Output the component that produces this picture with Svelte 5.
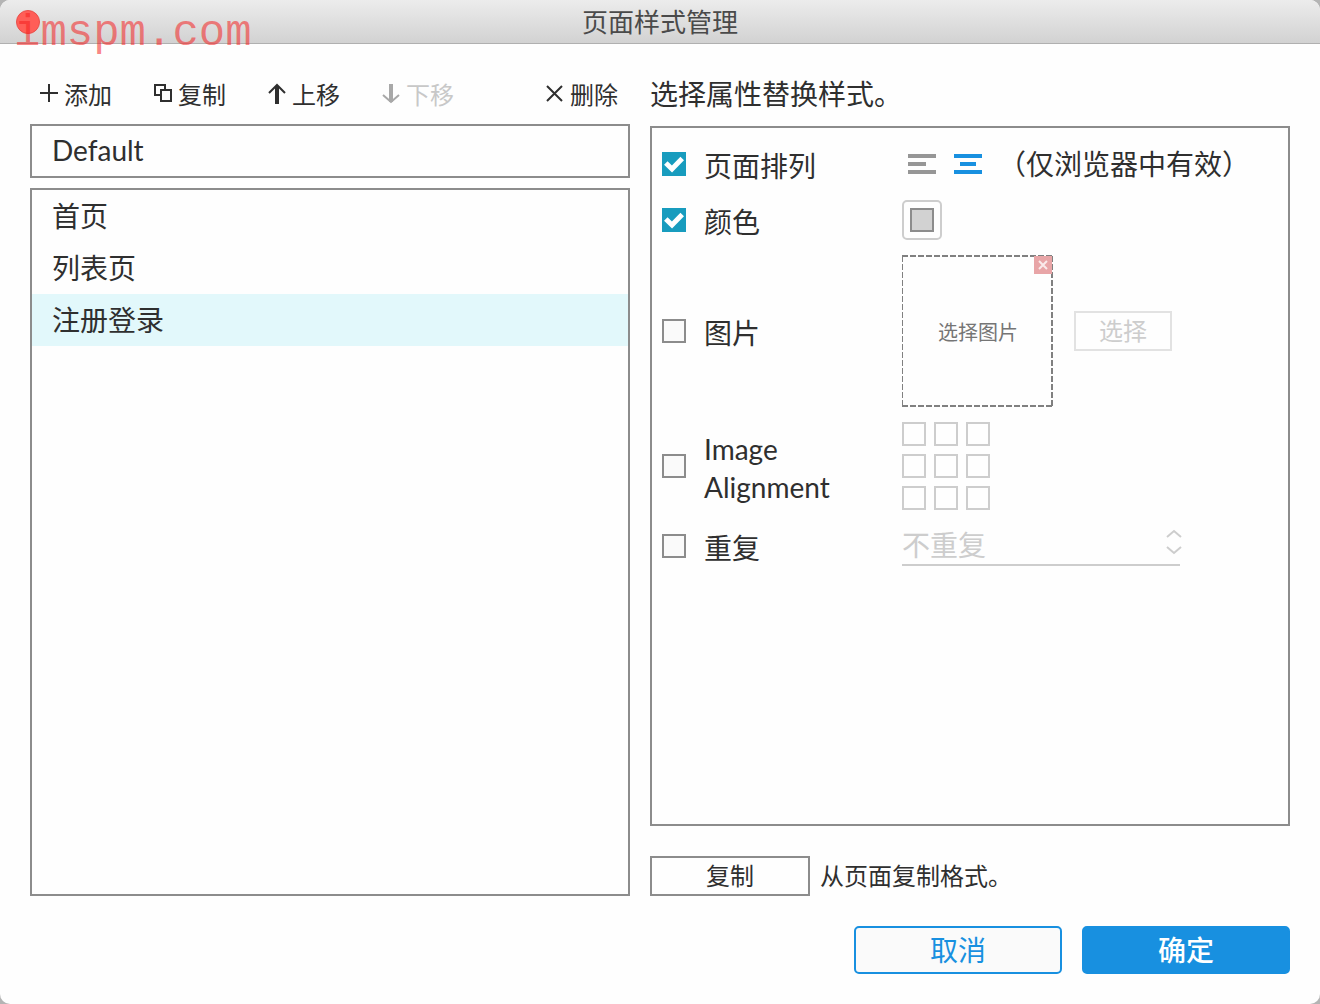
<script lang="ts">
	let selectedPage = $state('注册登录');
	let pageAlign = $state('center');
	let enabled = $state({
		align: true,
		color: true,
		image: false,
		imageAlign: false,
		repeat: false
	});

	const pages = ['首页', '列表页', '注册登录'];
	const anchors = ['左上', '上', '右上', '左', '中', '右', '左下', '下', '右下'];
</script>

{#snippet checkbox(id: keyof typeof enabled)}
	<span class="check">
		<input type="checkbox" {id} bind:checked={enabled[id]} />
		{#if enabled[id]}
			<svg viewBox="0 0 24 24" aria-hidden="true">
				<path d="M3.8 11l6.2 6L20.2 6.5" />
			</svg>
		{/if}
	</span>
{/snippet}

<div class="window">
	<header class="titlebar">
		<span class="close-dot"></span>
		<h1>页面样式管理</h1>
		<span class="site">imspm.com</span>
	</header>

	<main class="content">
		<section class="styles">
			<div class="toolbar">
				<button class="tool">
					<svg viewBox="0 1 18 24"><path d="M0 11h18M9 2v18" /></svg>
					添加
				</button>
				<button class="tool">
					<svg viewBox="0 1 18 24"><path d="M7 13H1V3h10v5M7 8h10v11H7z" /></svg>
					复制
				</button>
				<button class="tool">
					<svg viewBox="0 1 18 24">
						<path d="M1 11l8-8 8 8" />
						<path class="stem" d="M9 4v18" />
					</svg>
					上移
				</button>
				<button class="tool" disabled>
					<svg viewBox="0 1 18 24">
						<path d="M1 13l8 7 8-7" />
						<path class="stem" d="M9 2v18" />
					</svg>
					下移
				</button>
				<button class="tool remove">
					<svg viewBox="0 1 18 24"><path d="M1 4l15 15M16 4L1 19" /></svg>
					删除
				</button>
			</div>

			<button class="item default" onclick={() => (selectedPage = 'Default')}>Default</button>

			<ul class="list">
				{#each pages as page}
					<li>
						<button
							class="item"
							class:selected={page === selectedPage}
							onclick={() => (selectedPage = page)}
						>
							{page}
						</button>
					</li>
				{/each}
			</ul>
		</section>

		<section class="properties">
			<h2>选择属性替换样式。</h2>

			<div class="panel">
				<div class="row">
					{@render checkbox('align')}
					<label for="align">页面排列</label>
					<div class="control aligns">
						<button
							class="align"
							class:active={pageAlign === 'left'}
							aria-label="左对齐"
							onclick={() => (pageAlign = 'left')}
						>
							<svg viewBox="0 0 28 20"><path d="M0 2h28M0 10h18M0 18h28" /></svg>
						</button>
						<button
							class="align"
							class:active={pageAlign === 'center'}
							aria-label="居中"
							onclick={() => (pageAlign = 'center')}
						>
							<svg viewBox="0 0 28 20"><path d="M0 2h28M6 10h16M0 18h28" /></svg>
						</button>
						<span class="hint">（仅浏览器中有效）</span>
					</div>
				</div>

				<div class="row">
					{@render checkbox('color')}
					<label for="color">颜色</label>
					<div class="control">
						<button class="swatch" aria-label="颜色"><span></span></button>
					</div>
				</div>

				<div class="row image-row">
					{@render checkbox('image')}
					<label for="image">图片</label>
					<div class="control picker">
						<div class="drop">
							<svg class="outline" viewBox="0 0 152 152" aria-hidden="true">
								<path d="M0 1h151M150 1v150M0 151h151" />
								<path class="thin" d="M0.5 1v150" />
							</svg>
							<span>选择图片</span>
							<button class="clear" aria-label="清除" disabled={!enabled.image}>
								<svg viewBox="0 0 18 18"><path d="M5 5l8 8M13 5l-8 8" /></svg>
							</button>
						</div>
						<button class="choose" disabled={!enabled.image}>选择</button>
					</div>
				</div>

				<div class="row anchor-row">
					{@render checkbox('imageAlign')}
					<label for="imageAlign">Image Alignment</label>
					<div class="control anchors">
						{#each anchors as anchor}
							<input
								type="radio"
								name="anchor"
								value={anchor}
								aria-label={anchor}
								disabled={!enabled.imageAlign}
							/>
						{/each}
					</div>
				</div>

				<div class="row">
					{@render checkbox('repeat')}
					<label for="repeat">重复</label>
					<div class="control repeat">
						<select aria-label="重复" disabled={!enabled.repeat}>
							<option>不重复</option>
						</select>
						<svg viewBox="0 0 16 26" aria-hidden="true">
							<path d="M1 8l7-6 7 6M1 18l7 6 7-6" />
						</svg>
					</div>
				</div>
			</div>

			<div class="copy">
				<button id="copy-format">复制</button>
				<label for="copy-format">从页面复制格式。</label>
			</div>
		</section>
	</main>

	<footer class="actions">
		<button class="cancel">取消</button>
		<button class="confirm">确定</button>
	</footer>
</div>

<style>
	:global(body) {
		background: #b4b4b4;
	}

	.window {
		display: flex;
		flex-direction: column;
		min-height: 100vh;
		box-sizing: border-box;
		overflow: hidden;
		border-radius: 10px;
		background: #fefefe;
		color: #2f2f2f;
		font-family: Lato, 'Noto Sans CJK SC', sans-serif;
		font-size: 28px;
		line-height: 38px;
	}

	.window * {
		box-sizing: border-box;
	}

	button,
	select {
		margin: 0;
		padding: 0;
		border: 0;
		background: none;
		color: inherit;
		font: inherit;
	}

	button:not(:disabled) {
		cursor: pointer;
	}

	svg {
		display: block;
		fill: none;
		stroke: currentColor;
		stroke-width: 2;
	}

	h1,
	h2 {
		margin: 0;
		font-weight: 400;
	}

	.titlebar {
		position: relative;
		display: flex;
		align-items: center;
		justify-content: center;
		height: 44px;
		border-bottom: 1px solid #b0b0b0;
		background: linear-gradient(#ececec, #d2d2d2);
	}

	h1 {
		color: #4a4a4a;
		font-size: 26px;
	}

	.close-dot {
		position: absolute;
		top: 10px;
		left: 16px;
		width: 24px;
		height: 24px;
		border: 1px solid #e8504b;
		border-radius: 50%;
		background: #ff5e58;
	}

	.site {
		position: absolute;
		top: 7px;
		left: 14px;
		color: rgba(245, 30, 30, 0.55);
		font-family: 'Liberation Mono', monospace;
		font-size: 44px;
		line-height: 52px;
	}

	.content {
		display: grid;
		flex: 1;
		grid-template-columns: 15fr 16fr;
		gap: 20px;
		padding: 0 30px;
	}

	.styles,
	.properties {
		display: flex;
		flex-direction: column;
		min-width: 0;
	}

	.toolbar {
		display: flex;
		gap: 42px;
		height: 80px;
		padding: 21px 12px 0 10px;
	}

	.tool {
		display: flex;
		align-items: center;
		gap: 6px;
		height: 60px;
		font-size: 24px;
		white-space: nowrap;
	}

	.tool svg {
		width: 18px;
		height: 24px;
	}

	.tool .stem {
		stroke-width: 4;
	}

	.tool:disabled {
		color: #c8c8c8;
	}

	.tool:disabled svg {
		color: #a8a8a8;
	}

	.remove {
		margin-left: auto;
	}

	.item {
		display: block;
		width: 100%;
		height: 52px;
		padding: 0 20px;
		text-align: left;
	}

	.default {
		height: 54px;
		margin-bottom: 10px;
		padding-bottom: 2px;
		border: 2px solid #8c8c8c;
	}

	.list {
		flex: 1;
		margin: 0;
		padding: 0;
		border: 2px solid #8c8c8c;
		list-style: none;
	}

	.selected {
		background: #e2f8fb;
	}

	h2 {
		height: 82px;
		padding-top: 31px;
		font-size: 28px;
	}

	.panel {
		flex: 1;
		padding: 8px 10px;
		border: 2px solid #8c8c8c;
	}

	.row {
		display: grid;
		grid-template-columns: 24px 180px 1fr;
		column-gap: 18px;
		align-items: center;
		min-height: 56px;
	}

	.image-row {
		min-height: 166px;
	}

	.anchor-row {
		min-height: 104px;
	}

	.check {
		position: relative;
		height: 24px;
	}

	.check input {
		display: block;
		width: 24px;
		height: 24px;
		margin: 0;
		border: 2px solid #8c8c8c;
		appearance: none;
		background: #fafafa;
	}

	.check input:checked {
		border-color: #189cbe;
		background: #189cbe;
	}

	.check svg {
		position: absolute;
		inset: 0;
		stroke: #fff;
		stroke-width: 5;
		pointer-events: none;
	}

	.row label {
		padding: 3px 40px 0 0;
	}

	.control {
		display: flex;
		align-items: center;
	}

	.aligns {
		gap: 6px;
	}

	.align {
		padding: 10px 6px;
		color: #969696;
	}

	.align svg {
		width: 28px;
		height: 20px;
		stroke-width: 4;
	}

	.active {
		color: #1890e0;
	}

	.hint {
		margin-left: 4px;
		white-space: nowrap;
	}

	.swatch {
		width: 40px;
		height: 40px;
		padding: 6px;
		border: 2px solid #cdcdcd;
		border-radius: 5px;
	}

	.swatch span {
		display: block;
		height: 24px;
		border: 2px solid #8c8c8c;
		background: #d2d2d2;
	}

	.picker {
		gap: 20px;
	}

	.drop {
		position: relative;
		display: flex;
		align-items: center;
		justify-content: center;
		width: 152px;
		height: 152px;
		padding-top: 2px;
		color: #757575;
		font-size: 20px;
	}

	.outline {
		position: absolute;
		inset: 0;
		stroke: #808080;
		stroke-dasharray: 6 2;
	}

	.outline .thin {
		stroke-width: 1;
	}

	.clear {
		position: absolute;
		top: 1px;
		right: 2px;
		width: 18px;
		height: 18px;
		background: #e8a5a7;
		color: #faeaea;
	}

	.choose {
		width: 98px;
		height: 40px;
		border: 2px solid #e2e2e2;
		color: #cdcdcd;
		font-size: 24px;
		line-height: 36px;
	}

	.anchors {
		display: grid;
		grid-template-columns: repeat(3, 24px);
		gap: 8px;
	}

	.anchors input {
		width: 24px;
		height: 24px;
		margin: 0;
		border: 2px solid #cdcdcd;
		appearance: none;
	}

	.repeat {
		position: relative;
		width: 278px;
	}

	select {
		width: 100%;
		height: 40px;
		border-bottom: 2px solid #cdcdcd;
		border-radius: 0;
		appearance: none;
	}

	select:disabled {
		color: #cdcdcd;
		opacity: 1;
	}

	.repeat svg {
		position: absolute;
		top: 3px;
		right: -2px;
		width: 16px;
		height: 26px;
		color: #cdcdcd;
		pointer-events: none;
	}

	.copy {
		display: flex;
		align-items: center;
		gap: 10px;
		margin-top: 30px;
		font-size: 24px;
	}

	.copy button {
		width: 160px;
		height: 40px;
		border: 2px solid #8c8c8c;
		line-height: 36px;
	}

	.actions {
		display: flex;
		justify-content: flex-end;
		gap: 20px;
		padding: 30px;
	}

	.actions button {
		width: 208px;
		height: 48px;
		border: 2px solid #1890e0;
		border-radius: 5px;
	}

	.cancel {
		background: #fafafa;
		color: #1890e0;
	}

	.confirm {
		background: #1890e0;
		color: #fff;
		font-weight: 500;
	}
</style>
